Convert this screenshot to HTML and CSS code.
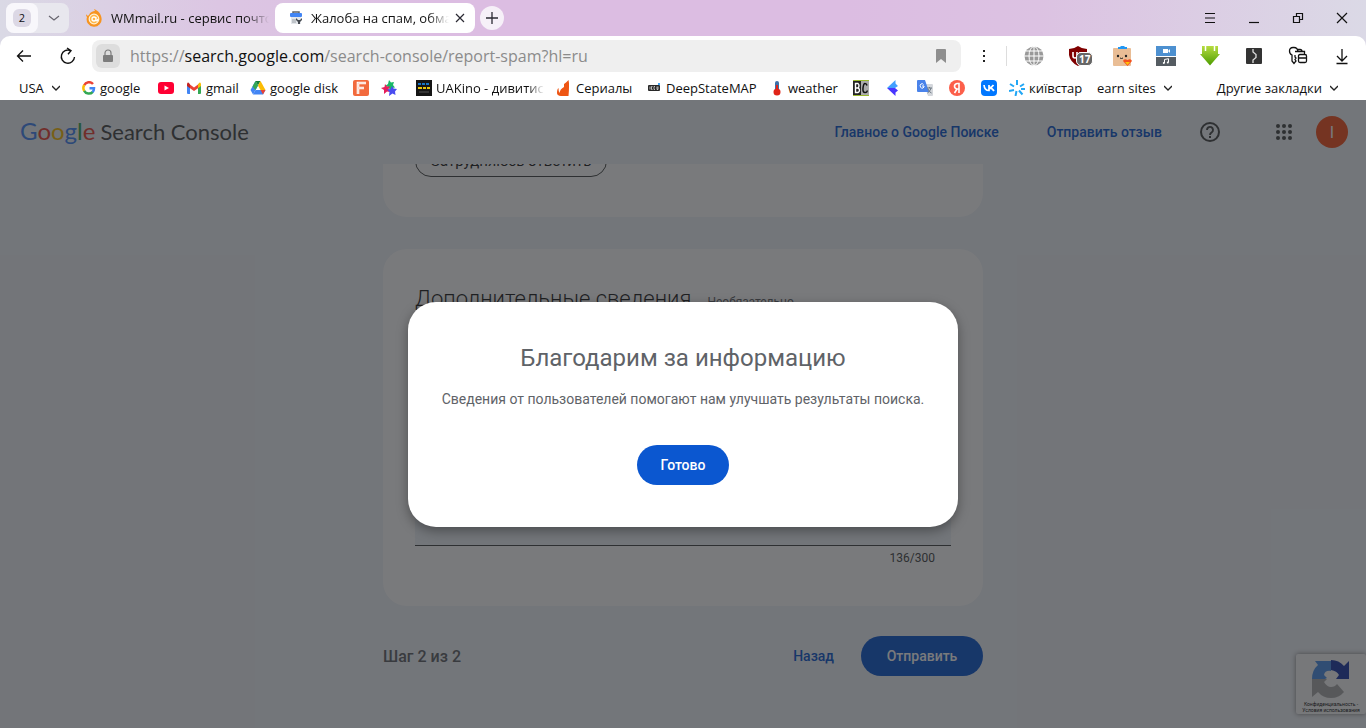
FILE: index.html
```html
<!DOCTYPE html>
<html lang="ru">
<head>
<meta charset="utf-8">
<title>Жалоба на спам, обман</title>
<link rel="stylesheet" href="styles.css">
</head>
<body>
<div class="browser">
  <div class="tabbar">
    <div class="tab-group">
      <button class="tab-count" type="button"><span>2</span></button>
      <button class="tab-more" type="button" aria-label="Список вкладок"><svg width="12" height="12" viewBox="0 0 12 12"><path d="M1 4l5 4 5-4" fill="none" stroke="#67646e" stroke-width="1.2"/></svg></button>
    </div>
    <div class="tab">
      <svg width="18" height="18" viewBox="0 0 18 18"><path d="M1 5c1 2 2 2 3 1C5 3 8 2 10 2L9 0c3 1 7 4 7.500 9A7.500 7.500 0 1 1 2 8C1 7 1 6 1 5z" fill="#f79420"/><circle cx="9" cy="10" r="4.800" fill="#ffb648" stroke="#fff3d7" stroke-width="1.200"/><path d="M11 8v3q1 2 2-1M11 10a2 2 0 1 1-4 0 2 2 0 0 1 4 0" fill="none" stroke="#fff" stroke-width="1.300"/></svg>
      <span class="fade tab-title">WMmail.ru - сервис почто</span>
    </div>
    <div class="tab tab-active">
      <svg width="18" height="18" viewBox="0 0 18 18"><path d="M6 5V3h6v2" fill="none" stroke="#5f6368" stroke-width="1.500"/><rect x="3" y="4" width="12" height="4" rx="1" fill="#4285f4"/><path d="M4 8h10v7H4z" fill="#e4e7eb"/><path d="M5 11h4M5 13h4" stroke="#9aa0a6"/><path d="M9 9v2l2 2v2h2v-2l2-2V9l-2 2h-2z" fill="#454a50"/></svg>
      <span class="fade tab-title">Жалоба на спам, обма</span>
      <button class="plain" type="button" aria-label="Закрыть вкладку"><svg width="10" height="10" viewBox="0 0 10 10"><path d="M1 1l8 8M9 1L1 9" stroke="#2b2a33" stroke-width="1.200"/></svg></button>
    </div>
    <button class="new-tab" type="button" aria-label="Новая вкладка"><svg width="12" height="12" viewBox="0 0 12 12"><path d="M6 0v12M0 6h12" stroke="#2b2a33" stroke-width="1.300"/></svg></button>
    <div class="window-controls">
      <button class="plain" type="button" aria-label="Меню"><svg width="12" height="12" viewBox="0 0 12 12"><path d="M1 1.500h10M1 6h10M1 10.500h10" stroke="#111" stroke-width="1.200"/></svg></button>
      <button class="plain" type="button" aria-label="Свернуть"><svg width="12" height="12" viewBox="0 0 12 12"><path d="M1 10.500h10" stroke="#111" stroke-width="1.200"/></svg></button>
      <button class="plain" type="button" aria-label="Развернуть"><svg width="12" height="12" viewBox="0 0 12 12"><path d="M1.500 4.500h6v6h-6zM4.500 4.500v-3h6v6h-3" fill="none" stroke="#111" stroke-width="1.200"/></svg></button>
      <button class="plain" type="button" aria-label="Закрыть"><svg width="12" height="12" viewBox="0 0 12 12"><path d="M1 1l10 10M11 1L1 11" stroke="#111" stroke-width="1.200"/></svg></button>
    </div>
  </div>

  <div class="chrome">
    <div class="toolbar">
      <button class="plain nav" type="button" aria-label="Назад"><svg width="16" height="16" viewBox="0 0 16 16"><path d="M15 8H1.500M7 2.500L1.500 8 7 13.500" fill="none" stroke="#111" stroke-width="1.300"/></svg></button>
      <button class="plain nav" type="button" aria-label="Обновить"><svg width="18" height="18" viewBox="0 0 18 18"><path d="M15.500 10a6.600 6.600 0 1 1-4-6.500M8 1l4 2.700-3 3.500" fill="none" stroke="#111" stroke-width="1.400"/></svg></button>
      <div class="address">
        <button class="lock" type="button" aria-label="Сведения о сайте"><svg width="12" height="14" viewBox="0 0 12 14"><rect x="1" y="6" width="10" height="7" rx="1" fill="#7d7d7d"/><path d="M3 7V4a3 3 0 0 1 6 0v3" fill="none" stroke="#7d7d7d" stroke-width="1.200"/></svg></button>
        <span class="url">https://<b>search.google.com</b>/search-console/report-spam?hl=ru</span>
        <svg width="10" height="14" viewBox="0 0 10 14"><path d="M0 1q0-1 1-1h8q1 0 1 1v13l-5-4-5 4z" fill="#8e8e8e"/></svg>
      </div>
      <button class="plain dots" type="button" aria-label="Ещё"><svg width="4" height="14" viewBox="0 0 4 14"><path d="M1 1h2v2H1zM1 6h2v2H1zM1 11h2v2H1z" fill="#222"/></svg></button>
      <div class="extensions">
        <svg width="20" height="20" viewBox="0 0 20 20"><circle cx="10" cy="10" r="9.500" fill="#999"/><path d="M10 0v20M0 10h20M2 5h16M2 15h16" stroke="#fff" stroke-width="1" fill="none"/><ellipse cx="10" cy="10" rx="5" ry="9.500" fill="none" stroke="#fff"/></svg>
        <span class="badge-wrap"><svg width="20" height="20" viewBox="0 0 20 20"><path d="M1 3q5 0 9-3 4 3 9 3v6q-1 7-9 11Q2 16 1 9z" fill="#800000"/><path d="M5 6v4q0 2 2 2t2-2V6m3 0v5" fill="none" stroke="#fff" stroke-width="1.600"/></svg><span class="badge">17</span></span>
        <svg width="20" height="20" viewBox="0 0 20 20"><rect x="1" y="2" width="18" height="18" rx="1" fill="#e9bd95"/><path d="M6 3V1h2l1-1h3l1 1h2v2z" fill="#2196f3"/><circle cx="6" cy="10" r="1.200" fill="#222"/><circle cx="14" cy="10" r="1.200" fill="#222"/><path d="M8 12q1.500 1 3 0" stroke="#222" fill="none"/><path d="M15.500 20L11 15q1-3 4.500-1 3.500-2 4.500 1z" fill="#f4511e"/><path d="M13 16h5l-2.500 3z" fill="#ffc107"/></svg>
        <svg width="20" height="20" viewBox="0 0 20 20"><path d="M0 0h20v10H0z" fill="#4d90d0"/><path d="M0 11h20v9H0z" fill="#555c62"/><path d="M7 3h5v4H7zM12 5l2-2v4z" fill="#fff"/><path d="M8.500 17v-3.500l4-.8v3.500" fill="none" stroke="#fff"/><circle cx="7.800" cy="17" r="1" fill="#fff"/><circle cx="11.800" cy="16.400" r="1" fill="#fff"/></svg>
        <svg width="20" height="20" viewBox="0 0 20 20"><defs><linearGradient id="green" x2="0" y2="1"><stop stop-color="#b6dc40"/><stop offset="1" stop-color="#4c9c00"/></linearGradient></defs><path d="M2 0h16v8h2L10 19.500 0 8h2z" fill="url(#green)"/><path d="M5.500 0v5M14.500 0v5" stroke="#fff" stroke-width="1.500"/></svg>
        <svg width="20" height="20" viewBox="0 0 20 20"><rect x="2" y="2" width="16" height="16" rx="1" fill="#333"/><path d="M9 3v3l3 2.500v3L9 14v3" fill="none" stroke="#ddd" stroke-width="1.300"/></svg>
        <svg width="20" height="20" viewBox="0 0 20 20"><path d="M10 5.500Q9.500 1.500 6 1.500H5Q1.500 1.500 1.500 5q0 3 2.500 4v6l2 2.500 2-2.500-1-1.500 1-1.500-1-1V9M7 5.500h7q0-2-2-2H9M12 8.500h5q1.500 0 1.500 1.500v5q0 1.500-1.500 1.500h-5q-1.500 0-1.500-1.500v-5q0-1.500 1.500-1.500zM10.500 12h8M16.500 8.500v-3H14" fill="none" stroke="#111" stroke-width="1.300"/></svg>
        <svg width="20" height="20" viewBox="0 0 20 20"><path d="M10 3v11.500M5 10l5 5 5-5M4.500 17.500h11" fill="none" stroke="#111" stroke-width="1.300"/></svg>
      </div>
    </div>

    <div class="bookmarks">
      <button class="bookmark" type="button">USA <svg class="chevron" width="8" height="6" viewBox="0 0 8 6"><path d="M0 1l4 4 4-4" fill="none" stroke="#222" stroke-width="1.300"/></svg></button>
      <a class="bookmark" href="#"><svg width="14" height="14" viewBox="0 0 14 14" fill="none" stroke-width="2.500"><path d="M2.200 4.300A5.300 5.300 0 0 1 11 3" stroke="#ea4335"/><path d="M2.300 10a5.500 5.500 0 0 1 0-6" stroke="#fbbc05"/><path d="M10.800 10.800a5.300 5.300 0 0 1-8.600-1" stroke="#34a853"/><path d="M7.500 7.200H12q0 2.500-1.500 4" stroke="#4285f4"/></svg>google</a>
      <a class="bookmark" href="#" aria-label="YouTube"><svg width="16" height="16" viewBox="0 0 16 16"><rect y="2" width="16" height="12" rx="3" fill="#f03"/><path d="M6.500 5.500v5L11 8z" fill="#fff"/></svg></a>
      <a class="bookmark" href="#"><svg width="16" height="16" viewBox="0 0 16 16"><path d="M1 4h3v10H2q-1 0-1-1z" fill="#4285f4"/><path d="M12 4h3v9q0 1-1 1h-2z" fill="#34a853"/><path d="M4 4.500L8 7.500l4-3v3.700L8 11 4 8.200z" fill="#ea4335"/><path d="M1 4q1-3 3 .5v3.700L1 6z" fill="#c5221f"/><path d="M15 4q-1-3-3 .5v3.700L15 6z" fill="#fbbc04"/></svg>gmail</a>
      <a class="bookmark" href="#"><svg width="16" height="16" viewBox="0 0 16 16"><path d="M5.500 1L.5 10 3 14.500 8 5.500z" fill="#4285f4"/><path d="M5.500 1h5L8 5.500z" fill="#188038"/><path d="M5.500 1L2.500 6.500 5.500 10 8 5.500z" fill="#34a853"/><path d="M10.500 1l5 9h-5L8 5.500z" fill="#fbbc04"/><path d="M5.500 10h10L13 14.500H3z" fill="#4285f4"/><path d="M10.500 10h5L13 14.500z" fill="#ea4335"/></svg>google disk</a>
      <a class="bookmark" href="#" aria-label="F"><svg width="16" height="16" viewBox="0 0 16 16"><rect width="16" height="16" rx="2" fill="#f26a3d"/><path d="M5 14V3h8M5 8h6" fill="none" stroke="#fff" stroke-width="2.600"/><path d="M5 14V3h8M5 8h6" fill="none" stroke="#f9b6a0" stroke-width=".6"/></svg></a>
      <a class="bookmark" href="#" aria-label="Звёзды"><svg width="16" height="16" viewBox="0 0 16 16"><path d="M8 0l2 2.500 3-.5-1 3 2 2.500-3 .5-2 2-1.500-3L4 6l3-2z" fill="#17b865"/><path d="M4 4l2 2.500h3L7.500 9 9 12l-3-.5L3 14v-4L0 8l3.500-1z" fill="#e61e5a"/><path d="M11 6l1.500 2.500 3.500.5-2 2.500.5 3.500-3-1.500L8 16l.5-4L6 9.500l3.500-.5z" fill="#4a4cf0"/></svg></a>
      <a class="bookmark" href="#"><svg width="16" height="16" viewBox="0 0 16 16"><path d="M0 0h16v16H0z" fill="#151515"/><path d="M2 4h3m1 0h3m1 0h3" stroke="#1675c8" stroke-width="2"/><path d="M2 8h4m1 0h3m1 0h3" stroke="#e8c60a" stroke-width="2"/><path d="M3 12h10" stroke="#555"/></svg><span class="fade uakino">UAKino - дивитис</span></a>
      <a class="bookmark" href="#"><svg width="16" height="16" viewBox="0 0 16 16"><path d="M8 4l2-1.500L12.500 0l.5 3v4q0 4-.5 9H5Q1 15.500 1 13q0-4 1.500-5 0 4 1 5Q4 9 8 7z" fill="#ee5513"/></svg>Сериалы</a>
      <a class="bookmark" href="#"><svg width="15" height="14" viewBox="0 0 15 14"><rect x="1" y="4" width="12" height="6" rx="1" fill="#282828"/><path d="M3 5.500v3M5.500 5.500h-1v3h1M8 5.500H7v3h1M10 5.500v3h1v-3" stroke="#ddd" stroke-width=".8" fill="none"/><path d="M11 3h2" stroke="#42a5f5" stroke-width="2"/></svg>DeepStateMAP</a>
      <a class="bookmark" href="#"><svg width="12" height="16" viewBox="0 0 12 16"><rect x="3" y="1" width="4" height="11" rx="2" fill="#3d6fa8"/><circle cx="5" cy="12" r="3.500" fill="#e02418"/><path d="M5 5v7" stroke="#e02418" stroke-width="2"/></svg>weather</a>
      <a class="bookmark" href="#" aria-label="BC"><svg width="16" height="16" viewBox="0 0 16 16"><path d="M0 0h16v16H0z" fill="#9ab82e"/><path d="M0 1h8v14H0z" fill="#222"/><path d="M8 1h8v14H8z" fill="#aaa"/><path d="M2.500 3.500v9H5q1.500-.5 1.500-2.200T5 8H3h2q1-.5 1-2.200T5 3.500z" fill="none" stroke="#fff" stroke-width="1.400"/><path d="M14 5.500Q13.500 3.500 12 3.500T10 8t2 4.500 2-2" fill="none" stroke="#111" stroke-width="1.500"/></svg></a>
      <a class="bookmark" href="#" aria-label="Закладка"><svg width="12" height="16" viewBox="0 0 12 16"><path d="M8.500 0v3.500L11 6 8 8H0z" fill="#42a0ff"/><path d="M0 8h8l3 2.500-2.500 2V16z" fill="#4936ff"/></svg></a>
      <a class="bookmark" href="#" aria-label="Переводчик"><svg width="16" height="16" viewBox="0 0 16 16"><path d="M7 4h8q1 0 1 1v10q0 1-1 1h-4z" fill="#d4d7dc"/><path d="M1 0h7l4 12H1q-1 0-1-1V1q0-1 1-1z" fill="#4a83ea"/><path d="M6.500 4.500Q5.500 3 4 4t-.5 3 2.500 1 1-2H5" fill="none" stroke="#fff"/><path d="M10 8h5m-2.500-1v1m-2 5q3-2 3.500-5m-3 1q1 3 3.500 4" fill="none" stroke="#6b7680"/></svg></a>
      <a class="bookmark" href="#" aria-label="Яндекс"><svg width="16" height="16" viewBox="0 0 16 16"><circle cx="8" cy="8" r="8" fill="#fc5f4a"/><path d="M10 13V3.500H8Q5.500 4 5.500 6.200T8 9h2M8 9l-2.500 4" fill="none" stroke="#fff" stroke-width="1.600"/></svg></a>
      <a class="bookmark" href="#" aria-label="VK"><svg width="16" height="16" viewBox="0 0 16 16"><rect width="16" height="16" rx="4" fill="#07f"/><path d="M3 5q.5 5.500 5 5.500V5m0 3q3-.5 4.500-3M8 8q3.500 0 5 3" fill="none" stroke="#fff" stroke-width="1.700"/></svg></a>
      <a class="bookmark" href="#"><svg width="16" height="16" viewBox="0 0 16 16"><path d="M8 0v5M15 4l-4 2.500M1 4l4 2.500M0 11l5-1M6.500 16L7.500 11M13.500 14.500L10 10.500M12 9h4" fill="none" stroke="#22a7f5" stroke-width="2"/></svg>київстар</a>
      <button class="bookmark" type="button">earn sites <svg class="chevron" width="8" height="6" viewBox="0 0 8 6"><path d="M0 1l4 4 4-4" fill="none" stroke="#222" stroke-width="1.300"/></svg></button>
      <button class="bookmark bookmark-other" type="button">Другие закладки <svg class="chevron" width="8" height="6" viewBox="0 0 8 6"><path d="M0 1l4 4 4-4" fill="none" stroke="#222" stroke-width="1.300"/></svg></button>
    </div>
  </div>

  <div class="page">
    <header class="header">
      <div class="logo"><span class="google"><span class="blue">G</span><span class="red">o</span><span class="yellow">o</span><span class="blue">g</span><span class="green">l</span><span class="red">e</span></span><span>Search Console</span></div>
      <nav class="links"><a href="#">Главное о Google Поиске</a><a href="#">Отправить отзыв</a></nav>
      <button class="plain help" type="button" aria-label="Справка"><svg width="20" height="20" viewBox="0 0 20 20"><circle cx="10" cy="10" r="9" fill="none" stroke="#444746" stroke-width="2"/><path d="M7 8a3 3 0 1 1 4.800 2.300Q10 11.500 10 13" fill="none" stroke="#444746" stroke-width="1.900"/><path d="M9 14h2v2H9z" fill="#444746"/></svg></button>
      <button class="plain apps" type="button" aria-label="Приложения Google"><svg width="16" height="16" viewBox="0 0 16 16"><g fill="#444746"><circle cx="2" cy="2" r="2"/><circle cx="8" cy="2" r="2"/><circle cx="14" cy="2" r="2"/><circle cx="2" cy="8" r="2"/><circle cx="8" cy="8" r="2"/><circle cx="14" cy="8" r="2"/><circle cx="2" cy="14" r="2"/><circle cx="8" cy="14" r="2"/><circle cx="14" cy="14" r="2"/></g></svg></button>
      <button class="avatar" type="button">I</button>
    </header>

    <main class="content">
      <div class="form">
        <section class="card"><button class="chip" type="button">Затрудняюсь ответить</button></section>
        <section class="card">
          <div class="card-head"><h2><label for="details">Дополнительные сведения</label></h2><span>Необязательно</span></div>
          <textarea class="details" id="details"></textarea>
          <div class="counter">136/300</div>
        </section>
        <div class="actions">
          <span class="step">Шаг 2 из 2</span>
          <button class="text-button" type="button">Назад</button>
          <button class="filled-button submit" type="button">Отправить</button>
        </div>
      </div>
    </main>

    <div class="captcha">
      <svg width="40" height="40" viewBox="0 0 40 40"><path d="M1 20Q1 11 7 6L4 2h16v10q-6-1-7 4l3 3-2 1z" fill="#4a90e8"/><path d="M20 1q8 0 13 6l5-5v18H25l3-4q-2-4-8-5z" fill="#1c3aa9"/><path d="M1 20h15l-3 3q3 5 7 5 4 0 6-3l7 8q-5 6-13 6-8 0-13-6l-6 5z" fill="#ababab"/></svg>
      <div class="captcha-links"><a href="#">Конфиденциальность</a> - <a href="#">Условия использования</a></div>
    </div>

    <div class="scrim">
      <div class="dialog" role="dialog" aria-labelledby="dialog-title">
        <h1 id="dialog-title">Благодарим за информацию</h1>
        <p>Сведения от пользователей помогают нам улучшать результаты поиска.</p>
        <button class="filled-button" type="button">Готово</button>
      </div>
    </div>
  </div>
</div>
</body>
</html>
```
FILE: styles.css
```css
* { box-sizing: border-box; }
body { margin: 0; font-family: "Open Sans", "Noto Sans", sans-serif; color: #111; }
button { font: inherit; color: inherit; border: 0; padding: 0; background: none; cursor: pointer; }
a { color: inherit; text-decoration: none; }
svg { flex: none; display: block; }

.browser { display: flex; flex-direction: column; height: 100vh; overflow: hidden; background: linear-gradient(90deg, #dad9e5 0, #dcc6e3 16%, #dcbde2 32%, #dcbde2 62%, #dcc2e2 76%, #dbd9e6 100%) top / 100% 50px no-repeat; }
.plain { display: grid; place-items: center; }
.fade { overflow: hidden; white-space: nowrap; -webkit-mask-image: linear-gradient(90deg, #000 85%, transparent); mask-image: linear-gradient(90deg, #000 85%, transparent); }

/* Tabs */
.tabbar { display: flex; align-items: center; height: 36px; padding: 0 18px 0 6px; font-size: 13px; }
.tab-group { display: flex; width: 63px; height: 30px; border-radius: 8px; background: #e8e7ee; }
.tab-count { display: grid; place-items: center; width: 32px; border-radius: 8px; background: #f8f7fb; font-size: 11px; }
.tab-count span { width: 18px; height: 18px; line-height: 18px; border-radius: 6px; background: #dcd8e5; }
.tab-more { display: grid; place-items: center; flex: 1; }
.tab { display: flex; align-items: center; gap: 8px; width: 200px; height: 30px; padding: 0 10px 0 16px; }
.tab + .tab { margin-left: 6px; }
.tab-title { flex: 1; }
.tab:not(.tab-active) { padding-right: 0; }
.tab-active { gap: 6px; padding-left: 12px; border-radius: 8px; background: #fff; }
.new-tab { display: grid; place-items: center; width: 24px; height: 24px; margin-left: 5px; border-radius: 50%; background: #f6f0f8; }
.window-controls { display: flex; gap: 32px; margin-left: auto; }

/* Toolbar */
.chrome { background: #fff; border-radius: 10px 10px 0 0; }
.toolbar { display: flex; align-items: center; height: 40px; padding-right: 14px; }
.nav { width: 44px; height: 32px; }
.nav:first-child { margin-left: 2px; }
.address { display: flex; align-items: center; flex: 1; gap: 10px; height: 32px; margin-left: 2px; padding: 0 15px 0 4px; border-radius: 8px; background: #efefef; }
.lock { display: grid; place-items: center; width: 24px; height: 24px; border-radius: 6px; background: #ddd; }
.url { flex: 1; font-size: 16px; color: #8b8b8b; white-space: nowrap; }
.url b { font-weight: 400; color: #111; }
.dots { width: 45px; height: 32px; }
.extensions { display: flex; gap: 24px; padding-left: 17px; border-left: 1px solid #ddd; }
.badge-wrap { position: relative; }
.badge { position: absolute; left: 8px; top: 6px; padding: 0 2px; border: 1px solid #fff; border-radius: 5px; background: #666; color: #fff; font-size: 10px; line-height: 12px; font-weight: 700; }

/* Bookmarks */
.bookmarks { display: grid; grid-template-columns: 63px 76px 28px 64px 103px 28px 35px 140px 91px 125px 81px 34px 30px 32px 32px 28px 88px auto 1fr; align-items: center; height: 24px; padding: 0 28px 0 19px; font-size: 13px; }
.bookmark { display: flex; align-items: center; gap: 4px; white-space: nowrap; }
.chevron { margin-left: 4px; }
.bookmark-other { justify-self: end; }
.uakino { max-width: 108px; }

/* Page */
.page { position: relative; display: flex; flex-direction: column; flex: 1; min-height: 0; background: #f0f4f9; font-family: Roboto, sans-serif; }
.header { display: flex; align-items: center; height: 64px; flex: none; padding: 0 18px 0 20px; color: #444746; }
.logo { display: flex; align-items: baseline; gap: 5px; flex: 1; padding-bottom: 4px; font-family: Lato, sans-serif; font-size: 22px; }
.google { font-size: 24px; }
.blue { color: #4285f4; }
.red { color: #ea4335; }
.yellow { color: #fbbc04; }
.green { color: #34a853; }
.links { display: flex; gap: 48px; color: #0b57d0; font-size: 14px; font-weight: 500; }
.help { margin-left: 38px; }
.apps { margin: 0 24px 0 56px; }
.avatar { width: 32px; height: 32px; border-radius: 50%; background: #f4511e; color: #fff; font-size: 16px; }

.content { display: flex; flex-direction: column; justify-content: flex-end; align-items: center; flex: 1; min-height: 0; overflow: hidden; padding: 0 16px 52px; }
.form { width: 100%; max-width: 600px; }
.card { margin-bottom: 32px; padding: 34px 32px 40px; border-radius: 24px; background: #fff; }
.card + .card { margin-bottom: 30px; }
.chip { display: block; height: 32px; padding: 0 15px; border: 1px solid #444746; border-radius: 16px; font-size: 15px; color: #1f1f1f; }
.card-head { display: flex; align-items: baseline; gap: 16px; font-size: 12px; color: #5f6368; }
.card-head h2 { margin: 0; font-size: 22px; line-height: 32px; font-weight: 300; color: #1f1f1f; }
.details { display: block; width: 100%; height: 200px; margin-top: 31px; border: 0; border-bottom: 1px solid #444746; background: #f0f4f9; resize: none; }
.counter { padding: 4px 16px 0 0; text-align: right; font-size: 12px; line-height: 16px; color: #444746; }
.actions { display: flex; align-items: center; }
.step { flex: 1; font-size: 16px; font-weight: 500; color: #5f6368; }
.text-button { padding: 0 27px; color: #0b57d0; font-size: 14px; font-weight: 500; }
.filled-button { height: 40px; padding: 0 24px; border-radius: 20px; background: #0b57d0; color: #fff; font-size: 14px; font-weight: 500; }
.submit { min-width: 122px; }

.captcha { position: absolute; right: 0; bottom: 14px; display: flex; flex-direction: column; align-items: center; width: 70px; height: 60px; padding-top: 5px; border-radius: 2px; background: #f9f9f9; box-shadow: 0 0 5px #808080; }
.captcha-links { width: 64px; margin-top: 2px; font-size: 5px; line-height: 6px; text-align: center; color: #111; }

.scrim { position: absolute; inset: 0; display: grid; place-items: center; background: rgba(32, 33, 36, .6); }
.dialog { width: 550px; max-width: 100%; padding: 40px 24px 42px; border-radius: 28px; background: #fff; box-shadow: 0 4px 12px rgba(0, 0, 0, .35); text-align: center; color: #5f6368; }
.dialog h1 { margin: 0; font-size: 24px; line-height: 32px; font-weight: 400; }
.dialog p { margin: 15px 0 36px; font-size: 14px; line-height: 20px; }
```
